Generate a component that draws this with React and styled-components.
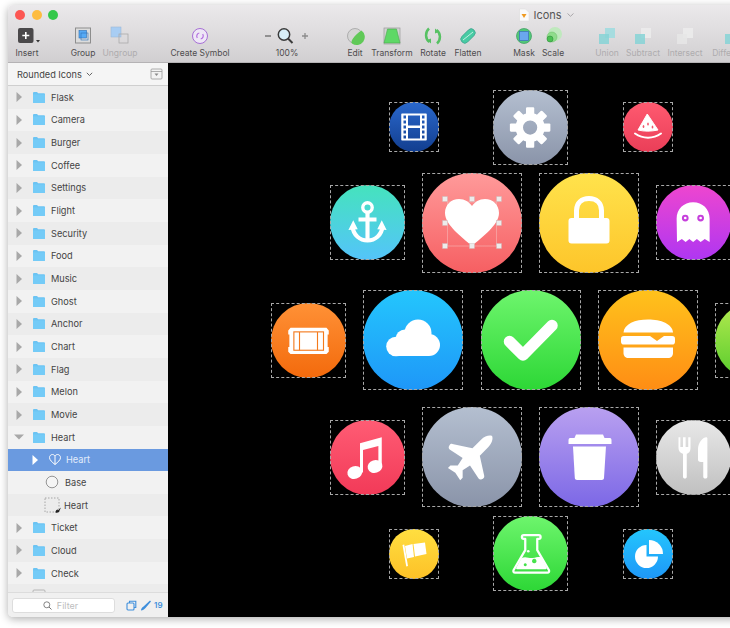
import styled, { createGlobalStyle } from "styled-components";

const GlobalStyle = createGlobalStyle`
  html, body {
    margin: 0;
    padding: 0;
    background: #fff;
    font-family: "Inter", "Liberation Sans", sans-serif;
  }
`;

const Page = styled.div`
  width: 730px;
  height: 628px;
  padding: 5px 0 0 8px;
  box-sizing: border-box;
  overflow: hidden;
`;

const Ventana = styled.div`
  width: 760px;
  height: 612px;
  display: flex;
  flex-direction: column;
  border-radius: 5px;
  overflow: hidden;
  box-shadow: 0 2px 9px rgba(0, 0, 0, 0.32);
`;

const Barra = styled.header`
  height: 58px;
  flex: none;
  display: flex;
  flex-direction: column;
  background: linear-gradient(#ebe9eb, #d1cfd1);
  border-bottom: 1px solid #b5b3b5;
  box-sizing: border-box;
`;

const FilaTitulo = styled.div`
  height: 19px;
  flex: none;
  display: flex;
  align-items: center;
  padding-left: 7px;
`;

const Luz = styled.span`
  width: 10px;
  height: 10px;
  border-radius: 50%;
  margin-right: 6.5px;
  background: ${(props) => props.$color};
`;

const Titulo = styled.div`
  display: flex;
  align-items: center;
  margin-left: 453px;
  font-size: 11px;
  color: #555;
  gap: 4px;
  svg {
    display: block;
  }
`;

const Herramientas = styled.div`
  display: flex;
  align-items: flex-start;
`;

const Tool = styled.div`
  width: ${(props) => props.$w}px;
  margin-left: ${(props) => props.$gap || 0}px;
  flex: none;
  display: flex;
  flex-direction: column;
  align-items: center;
  font-size: 8.5px;
  white-space: nowrap;
  color: ${(props) => (props.$off ? "#aeacae" : "#4e4c4e")};
  svg {
    display: block;
    height: 22px;
    margin-top: 1px;
    margin-bottom: 1px;
  }
`;

const Cuerpo = styled.div`
  flex: 1;
  display: flex;
  min-height: 0;
`;

const Lateral = styled.aside`
  width: 160px;
  flex: none;
  display: flex;
  flex-direction: column;
  background: #efefef;
`;

const CabeceraLateral = styled.div`
  height: 23px;
  flex: none;
  display: flex;
  align-items: center;
  justify-content: space-between;
  padding: 0 5px 0 9px;
  background: #f5f5f5;
  border-bottom: 1px solid #cfcfcf;
  box-sizing: border-box;
  font-size: 9.2px;
  color: #444;
  svg {
    display: block;
  }
`;

const Pagina = styled.span`
  display: flex;
  align-items: center;
  gap: 4px;
`;

const Lista = styled.div`
  flex: 1;
  overflow: hidden;
  min-height: 0;
`;

const Fila = styled.div`
  height: 22.67px;
  display: flex;
  align-items: center;
  font-size: 9.2px;
  box-sizing: border-box;
  padding-left: ${(props) => props.$indent}px;
  color: ${(props) => (props.$selected ? "#e4edfb" : "#444")};
  background: ${(props) =>
    props.$selected ? "#6a9ae0" : props.$alt ? "#f2f2f2" : "#ececec"};
  svg {
    display: block;
    flex: none;
  }
`;

const Hueco = styled.span`
  width: 8px;
  flex: none;
`;

const Etiqueta = styled.span`
  margin-left: ${(props) => props.$gap}px;
`;

const PieLateral = styled.div`
  height: 25px;
  flex: none;
  display: flex;
  align-items: center;
  padding-left: 4px;
  background: #f0f0f0;
  border-top: 1px solid #dcdcdc;
  box-sizing: border-box;
  color: #3f8fdc;
  font-size: 8px;
  font-weight: 600;
  svg {
    display: block;
  }
`;

const Filtro = styled.div`
  width: 103px;
  height: 15px;
  display: flex;
  align-items: center;
  justify-content: center;
  gap: 5px;
  background: #fff;
  border: 1px solid #ddd;
  border-radius: 3px;
  box-sizing: border-box;
  margin-right: 11px;
  color: #bdbdbd;
  font-size: 9px;
  font-weight: 400;
  padding-right: 6px;
`;

const Pluma = styled.svg`
  margin-left: 3px;
`;

const Contador = styled.span`
  margin-left: 2px;
`;

const Lienzo = styled.main`
  flex: 1;
  position: relative;
  background: #000;
  overflow: hidden;
`;

const Marco = styled.div`
  position: absolute;
  left: ${(props) => props.$x - 168}px;
  top: ${(props) => props.$y - 63}px;
  width: ${(props) => props.$size}px;
  height: ${(props) => props.$size}px;
  box-sizing: border-box;
  outline: 1px dashed #a8a8a8;
  outline-offset: -1px;
`;

const Disco = styled.div`
  width: 100%;
  height: 100%;
  border-radius: 50%;
  background: linear-gradient(${(props) => props.$from}, ${(props) => props.$to});
  svg {
    display: block;
    width: 100%;
    height: 100%;
  }
`;

const W = "#fff";

const FolderIcon = () => (
  <svg width="14" height="13" viewBox="0 0 14 13">
    <path d="M1 2.2C1 1.5 1.5 1 2.2 1H5l1.2 1.3h5.6c.7 0 1.2.5 1.2 1.2V11c0 .6-.5 1-1.2 1H2.2C1.5 12 1 11.6 1 11z" fill="#6cc4f3" />
    <path d="M1 3.6h12V11c0 .6-.5 1-1.2 1H2.2C1.5 12 1 11.6 1 11z" fill="#74cbf7" />
  </svg>
);

const Flecha = ({ down, color = "#a8a8a8" }) => (
  <svg width="10" height="10" viewBox="0 0 10 10">
    {down ? (
      <path d="M0 2.5h10L5 7.5z" fill={color} />
    ) : (
      <path d="M2.5 0v10L8 5z" fill={color} />
    )}
  </svg>
);

const capas = [
  "Flask", "Camera", "Burger", "Coffee", "Settings", "Flight", "Security", "Food",
  "Music", "Ghost", "Anchor", "Chart", "Flag", "Melon", "Movie",
];

const capasFin = ["Ticket", "Cloud", "Check"];

const CarpetaFila = ({ nombre, alt, open }) => (
  <Fila $indent={6} $alt={alt}>
    <Flecha down={open} />
    <Hueco />
    <FolderIcon />
    <Etiqueta $gap={5}>{nombre}</Etiqueta>
  </Fila>
);

const Gear = () => (
  <g fill={W}>
    <circle cx="49.5" cy="50" r="14.5" fill="none" stroke={W} strokeWidth="10" />
    {[0, 45, 90, 135, 180, 225, 270, 315].map((a) => (
      <rect key={a} x="44" y="23" width="11" height="12" rx="1.5" transform={`rotate(${a} 49.5 50)`} />
    ))}
  </g>
);

const glyphs = {
  movie: (
    <path
      fillRule="evenodd"
      fill={W}
      d="M26 23h48a1.5 1.5 0 0 1 1.5 1.5v51a1.5 1.5 0 0 1-1.500 1.500H26a1.500 1.500 0 0 1-1.500-1.500v-51A1.500 1.500 0 0 1 26 23z
      M29 27v6h5v-6z M29 37v6h5v-6z M29 47v6h5v-6z M29 57v6h5v-6z M29 67v6h5v-6z
      M66 27v6h5v-6z M66 37v6h5v-6z M66 47v6h5v-6z M66 57v6h5v-6z M66 67v6h5v-6z
      M38 27v20h24v-20z M38 52v21h24v-21z"
    />
  ),
  melon: (
    <g fill={W}>
      <path d="M48.500 24L30 56c12 3 26 3 40 0z" stroke={W} strokeWidth="2" strokeLinejoin="round" />
      <path d="M24 63c16 11 36 11 52 0" fill="none" stroke={W} strokeWidth="4" strokeLinecap="round" />
      <ellipse cx="41" cy="49" rx="1.700" ry="3" fill="#f2546a" />
      <ellipse cx="50" cy="44" rx="1.700" ry="3" fill="#f2546a" />
      <ellipse cx="59" cy="50" rx="1.700" ry="3" fill="#f2546a" />
    </g>
  ),
  anchor: (
    <g stroke={W} fill="none">
      <circle cx="50" cy="30" r="6.300" strokeWidth="4.500" />
      <path d="M50 36v37" strokeWidth="5.500" />
      <path d="M38 46h24" strokeWidth="5.500" />
      <path d="M30 55c1 12 10 19 20 19s19-7 20-19" strokeWidth="5.500" />
      <path d="M24.500 60L31 47l6 12z M75.500 60L69 47l-6 12z" fill={W} stroke="none" />
    </g>
  ),
  heart: (
    <g>
      <path d="M25.500 29h49v44h-49z" fill="none" stroke="#f7b5b5" strokeWidth="0.600" />
      <path fill={W} d="M50 73C40 64 23 52 23 40c0-8 6-14 14-14 6 0 10 3 13 7 3-4 7-7 13-7 8 0 14 6 14 14 0 12-17 24-27 33z" />
      {[[23, 26], [50, 26], [77, 26], [23, 50], [77, 50], [23, 73], [50, 73], [77, 73]].map(([x, y]) => (
        <rect key={`${x}-${y}`} x={x - 2.500} y={y - 2.500} width="5" height="5" fill="#ececec" stroke="#c8b4b4" strokeWidth="0.400" />
      ))}
    </g>
  ),
  lock: (
    <g>
      <path d="M37.500 47V37.500C37.500 29.500 43 25.500 50 25.500S62.500 29.500 62.500 37.500V47" fill="none" stroke={W} strokeWidth="5" />
      <rect x="29.500" y="45" width="41" height="25.500" rx="3" fill={W} />
    </g>
  ),
  ghost: (
    <g>
      <path fill={W} d="M27.500 45C27.500 32 37 23 49.500 23S71.500 32 71.500 45V76L65 72l-5.500 4-5-4-5 4-5-4-5 4-5-4-6.500 4z" />
      <circle cx="39" cy="44" r="4.500" fill="#c63fdc" />
      <circle cx="59.500" cy="44" r="4.500" fill="#c63fdc" />
      <circle cx="39" cy="44" r="1.800" fill={W} />
      <circle cx="59.500" cy="44" r="1.800" fill={W} />
    </g>
  ),
  ticket: (
    <g>
      <path fill={W} d="M26 33h48l3 3.500v5.500h-1.500v16.500H77V65l-3 3H26l-3-3v-6.500h1.500V42H23v-5.500z" />
      <rect x="30.500" y="38.500" width="39.500" height="24.500" fill="none" stroke="#f47a1d" strokeWidth="1.500" />
      <path d="M38 38.500v24.500M62 38.500v24.500" stroke="#f47a1d" strokeWidth="1.500" />
    </g>
  ),
  cloud: (
    <g fill={W}>
      <circle cx="33" cy="56.500" r="9.800" />
      <circle cx="42" cy="49" r="9.500" />
      <circle cx="55" cy="43" r="13.500" />
      <circle cx="66" cy="55" r="11" />
      <rect x="33" y="50" width="33" height="16" />
    </g>
  ),
  check: (
    <path d="M28.500 51.500L42 65L71 35.500" fill="none" stroke={W} strokeWidth="11.500" strokeLinecap="round" strokeLinejoin="round" />
  ),
  burger: (
    <g fill={W}>
      <path d="M25.500 42.500C26 34 37 29.500 50 29.500S74.500 34 75 42.500z" />
      <rect x="23" y="46" width="54" height="8.500" rx="2.800" />
      <path d="M52 46h14l-7 5z" fill="#ffa81c" />
      <path d="M25.500 57.500h49.500V63c0 3-2 5-5 5H30.500c-3 0-5-2-5-5z" />
    </g>
  ),
  music: (
    <g fill={W}>
      <path d="M40 31L69 23v39h-4.500V34.500L44 40v30h-4z" />
      <ellipse cx="33" cy="70" rx="10" ry="8.500" transform="rotate(-18 33 70)" />
      <ellipse cx="60" cy="62" rx="10" ry="8.500" transform="rotate(-18 60 62)" />
    </g>
  ),
  plane: (
    <path
      fill={W}
      transform="translate(18.600 21.700) scale(2.450)"
      d="M17.800 19.200 16 11l3.500-3.500C21 6 21.500 4 21 3c-1-.5-3 0-4.500 1.500L13 8 4.800 6.200c-.5-.1-.9.1-1.100.5l-.3.5c-.2.5-.1 1 .3 1.300L9 12l-2 3H4l-1 1 3 2 2 3 1-1v-3l3-2 3.500 5.300c.3.4.8.5 1.300.3l.5-.2c.4-.3.6-.7.5-1.200z"
    />
  ),
  cup: (
    <g fill={W}>
      <path d="M37 27.500h27l1.500 3.500H71c1 0 1.500 1 1.500 2.500V37h-43v-3.500c0-1.500.5-2.500 1.500-2.500h4.500z" />
      <path d="M34 39.500h33L65 71c-.1 1.300-1 2-2.200 2H38c-1.200 0-2.100-.7-2.200-2z" />
    </g>
  ),
  fork: (
    <g fill={W}>
      <path d="M30 23h2.500v13h3.500V23h3.500v13H43V23h3v14c0 5-2 7-5 8v31c0 1.200-1 2-2.500 2S36 77.200 36 76V45c-3-1-6-3-6-8z" />
      <path d="M67 23c1 0 1.500.7 1.500 2v51c0 1.200-1 2-2.800 2-1.600 0-2.700-.8-2.700-2V56h-3c-2 0-4-1-4-3V39c0-8 6-16 11-16z" />
    </g>
  ),
  flag: (
    <g fill={W}>
      <path d="M27 32l3.500-1 7.500 43-3.500 1z" />
      <path d="M32 34l15-4 3 26-14 3z" />
      <path d="M49 30l23-3 3 23-23 5z" />
    </g>
  ),
  flask: (
    <g>
      <path d="M41 25.500h20a2 2 0 0 1 0 5h-2v15l15.500 26.500c1 2 0 3.500-2 3.500H29.500c-2 0-3-1.500-2-3.500L43 45.500v-15h-2a2 2 0 0 1 0-5z" fill="none" stroke={W} strokeWidth="3" strokeLinejoin="round" />
      <path fill={W} fillRule="evenodd" d="M38 56c6-3 10 1 15 0s9-2 11-1l7.500 14c.5 1-.2 2-1.200 2H32c-1 0-1.500-1-1-2z M55 57a3 3 0 1 0 .01 0z M43 63a2 2 0 1 0 .01 0z" />
      <circle cx="47" cy="47" r="1.800" fill={W} />
    </g>
  ),
  pie: (
    <g fill={W}>
      <path d="M47 55V32A23 23 0 1 0 70 55z" />
      <path d="M52 50V22A28 28 0 0 1 80 50z" />
    </g>
  ),
};

const iconos = [
  { id: "movie", x: 389, y: 102, size: 50, from: "#2a68cc", to: "#123e8f" },
  { id: "gear", x: 493, y: 90, size: 75, from: "#b4bfd0", to: "#8a94a9" },
  { id: "melon", x: 623, y: 102, size: 50, from: "#ff5a70", to: "#ea3e58" },
  { id: "anchor", x: 330, y: 185, size: 75, from: "#45e3bd", to: "#54c4fa" },
  { id: "heart", x: 422, y: 173, size: 100, from: "#ff9a9a", to: "#f65f62" },
  { id: "lock", x: 539, y: 173, size: 100, from: "#ffe34c", to: "#fdc52a" },
  { id: "ghost", x: 656, y: 185, size: 75, from: "#ee46cf", to: "#af36f2" },
  { id: "ticket", x: 271, y: 303, size: 75, from: "#ff9136", to: "#f36a0c" },
  { id: "cloud", x: 363, y: 290, size: 100, from: "#24c6fd", to: "#1e97f8" },
  { id: "check", x: 481, y: 290, size: 100, from: "#6ef56d", to: "#2dd736" },
  { id: "burger", x: 598, y: 290, size: 100, from: "#ffc21c", to: "#ff8d14" },
  { id: "lime", x: 715, y: 303, size: 75, from: "#b4ea50", to: "#58cc2c" },
  { id: "music", x: 330, y: 420, size: 75, from: "#ff5c74", to: "#f23a58" },
  { id: "plane", x: 422, y: 407, size: 100, from: "#b4bfd0", to: "#8a94a9" },
  { id: "cup", x: 539, y: 407, size: 100, from: "#b9a0f0", to: "#7c68e6" },
  { id: "fork", x: 656, y: 420, size: 75, from: "#e8e8e8", to: "#c0c0c0" },
  { id: "flag", x: 389, y: 529, size: 50, from: "#ffdf40", to: "#fdc127" },
  { id: "flask", x: 493, y: 516, size: 75, from: "#6ef56d", to: "#2dd736" },
  { id: "pie", x: 623, y: 529, size: 50, from: "#24c6fd", to: "#1e97f8" },
];

const Ic = ({ children, w = 22 }) => (
  <svg width={w} height="22" viewBox={`0 0 ${w} 22`}>
    {children}
  </svg>
);

const Teal = ({ d1, d2 }) => (
  <Ic>
    <rect x="9" y="3" width="10" height="10" fill={d1} opacity="0.85" />
    <rect x="3" y="9" width="10" height="10" fill={d2} opacity="0.85" />
  </Ic>
);

const App = () => (
  <>
    <GlobalStyle />
    <Page>
      <Ventana>
        <Barra>
          <FilaTitulo>
            <Luz $color="#fc5753" />
            <Luz $color="#fdbc40" />
            <Luz $color="#34c84a" />
            <Titulo>
              <svg width="12" height="14" viewBox="0 0 12 14">
                <path d="M1.500 1h6L11 4.500V13H1.500z" fill="#fafafa" stroke="#d8d8d8" strokeWidth="0.500" />
                <path d="M3.500 6h5L6 10z" fill="#ef9a20" />
              </svg>
              <span>Icons</span>
              <svg width="9" height="6" viewBox="0 0 9 6">
                <path d="M1.500 1.500L4.500 4.300 7.500 1.500" fill="none" stroke="#a9a7a9" strokeWidth="1" />
              </svg>
            </Titulo>
          </FilaTitulo>
          <Herramientas>
            <Tool $w={38}>
              <Ic w={26}>
                <rect x="4" y="3" width="15.500" height="15" rx="2" fill="#4a484a" />
                <path d="M11.800 7v7M8.300 10.500h7" stroke="#fff" strokeWidth="1.600" />
                <path d="M22 15h4l-2 2.500z" fill="#333" />
              </Ic>
              Insert
            </Tool>
            <Tool $w={34} $gap={20}>
              <Ic>
                <rect x="3.500" y="3" width="15" height="15" fill="#dcdcdc" stroke="#8d8d8d" strokeWidth="1" />
                <rect x="7" y="5.500" width="7.500" height="7.500" fill="#56aaf5" stroke="#2c6fb5" strokeWidth="0.600" />
                <rect x="9" y="8" width="7" height="7" fill="none" stroke="#2c6fb5" strokeWidth="0.600" />
              </Ic>
              Group
            </Tool>
            <Tool $w={40} $off>
              <Ic>
                <rect x="2" y="2" width="10" height="10" fill="#a8cdf3" stroke="#9db9d6" strokeWidth="0.600" />
                <rect x="10" y="9" width="9" height="9" fill="none" stroke="#ababab" strokeWidth="0.800" />
              </Ic>
              Ungroup
            </Tool>
            <Tool $w={70} $gap={25}>
              <Ic>
                <circle cx="11" cy="11" r="7.500" fill="#eee7f6" stroke="#a76fd6" strokeWidth="1" />
                <path d="M8.300 13c-1.200-2 -.4-4.500 2-5M13.700 9c1.200 2 .4 4.500-2 5" fill="none" stroke="#b46fe0" strokeWidth="1.200" />
              </Ic>
              Create Symbol
            </Tool>
            <Tool $w={64} $gap={20}>
              <Ic w={50}>
                <path d="M3 11h6" stroke="#777" strokeWidth="1.300" />
                <circle cx="22" cy="9.500" r="5.700" fill="#d7eef7" stroke="#3b3b3b" strokeWidth="1.500" />
                <path d="M26 13.500L30.500 18" stroke="#3b3b3b" strokeWidth="2" />
                <path d="M40 11h6M43 8v6" stroke="#8c8c8c" strokeWidth="1.300" />
              </Ic>
              100%
            </Tool>
            <Tool $w={30} $gap={21}>
              <Ic>
                <circle cx="11" cy="11" r="7.500" fill="#d5d5d5" stroke="#9a9a9a" strokeWidth="0.700" />
                <path d="M17.500 5.500A8 8 0 0 1 8 18.500c-1-1-.5-3 1-5 2-3 5-6 8.500-8z" fill="#60c958" />
              </Ic>
              Edit
            </Tool>
            <Tool $w={44}>
              <Ic>
                <rect x="3" y="3" width="16" height="16" fill="#d2d2d2" stroke="#9a9a9a" strokeWidth="0.700" />
                <path d="M6.500 4L15.500 4 19 18H3z" fill="#5ed866" stroke="#4aa94f" strokeWidth="0.600" />
              </Ic>
              Transform
            </Tool>
            <Tool $w={38}>
              <Ic>
                <path d="M7 3.500C3 7 3 14 7.500 17" fill="none" stroke="#57c163" strokeWidth="2.500" />
                <path d="M5 15l4 3.500v-5z" fill="#57c163" />
                <path d="M15 18.500C19 15 19 8 14.500 5" fill="none" stroke="#57c163" strokeWidth="2.500" />
                <path d="M17 7l-4-3.500v5z" fill="#57c163" />
              </Ic>
              Rotate
            </Tool>
            <Tool $w={32}>
              <Ic>
                <rect x="2.500" y="7" width="17" height="8" rx="4" transform="rotate(-45 11 11)" fill="#48cba3" stroke="#3f9e8d" strokeWidth="0.700" />
                <path d="M6 15L16 7" stroke="#c6efe3" strokeWidth="1" />
              </Ic>
              Flatten
            </Tool>
            <Tool $w={32} $gap={24}>
              <Ic>
                <circle cx="11" cy="11" r="7.500" fill="#52c87a" stroke="#3b9b5c" strokeWidth="0.700" />
                <rect x="6.500" y="6.500" width="9" height="9" fill="#6aa7ee" stroke="#3b6eb5" strokeWidth="0.700" />
              </Ic>
              Mask
            </Tool>
            <Tool $w={26}>
              <Ic>
                <circle cx="13" cy="9" r="7" fill="#bfe9bd" />
                <circle cx="10" cy="12" r="5" fill="#8fdc8b" stroke="#6cbf6a" strokeWidth="0.500" />
                <circle cx="8" cy="14" r="3" fill="#4bc153" stroke="#2f8f3b" strokeWidth="0.600" />
              </Ic>
              Scale
            </Tool>
            <Tool $w={34} $gap={24} $off>
              <Teal d1="#9cdcdf" d2="#86d4d6" />
              Union
            </Tool>
            <Tool $w={38} $off>
              <Teal d1="#ececec" d2="#86d4d6" />
              Subtract
            </Tool>
            <Tool $w={46} $off>
              <Teal d1="#ececec" d2="#e6e6e6" />
              Intersect
            </Tool>
            <Tool $w={50} $off>
              <Teal d1="#9cdcdf" d2="#86d4d6" />
              Difference
            </Tool>
          </Herramientas>
        </Barra>
        <Cuerpo>
          <Lateral>
            <CabeceraLateral>
              <Pagina>
                Rounded Icons
                <svg width="7" height="5" viewBox="0 0 7 5">
                  <path d="M.8.800L3.500 3.500 6.200.800" fill="none" stroke="#666" strokeWidth="1" />
                </svg>
              </Pagina>
              <svg width="13" height="12" viewBox="0 0 13 12">
                <rect x="1" y="1" width="11" height="10" rx="1" fill="#f3f3f3" stroke="#9b9b9b" strokeWidth="0.800" />
                <path d="M1 3.500h11" stroke="#9b9b9b" strokeWidth="0.800" />
                <path d="M4.500 5.500h4L6.500 8z" fill="#8a8a8a" />
              </svg>
            </CabeceraLateral>
            <Lista>
              {capas.map((nombre, i) => (
                <CarpetaFila key={nombre} nombre={nombre} alt={i % 2 === 1} />
              ))}
              <CarpetaFila nombre="Heart" alt={true} open />
              <Fila $indent={22} $selected>
                <Flecha color="#fff" />
                <Hueco />
                <svg width="14" height="13" viewBox="0 0 14 13">
                  <path d="M7 11.500C4 9 1.500 7 1.500 4.500 1.500 3 2.800 1.500 4.400 1.500 5.500 1.500 6.400 2.200 7 3c.6-.8 1.500-1.500 2.600-1.500 1.600 0 2.900 1.500 2.900 3C12.500 7 10 9 7 11.500z M7 3v8.500" fill="none" stroke="#fff" strokeWidth="1" />
                </svg>
                <Etiqueta $gap={4}>Heart</Etiqueta>
              </Fila>
              <Fila $indent={37} $alt>
                <svg width="14" height="14" viewBox="0 0 14 14">
                  <circle cx="7" cy="7" r="5.800" fill="#f5f5f5" stroke="#8a8a8a" strokeWidth="0.900" />
                </svg>
                <Etiqueta $gap={6}>Base</Etiqueta>
              </Fila>
              <Fila $indent={36}>
                <svg width="18" height="17" viewBox="0 0 18 17">
                  <rect x="1" y="1" width="14" height="14" fill="none" stroke="#8a8a8a" strokeWidth="0.700" strokeDasharray="1.500 1.500" />
                  <path d="M11.500 15.500c0-2 1-3 2.500-3l-.2 1 3.200-3-1.800 3.800c-.5 1.500-2 1.700-3.700 1.200z" fill="#222" />
                </svg>
                <Etiqueta $gap={2}>Heart</Etiqueta>
              </Fila>
              {capasFin.map((nombre, i) => (
                <CarpetaFila key={nombre} nombre={nombre} alt={i % 2 === 0} />
              ))}
              <Fila $indent={24}>
                <svg width="14" height="14" viewBox="0 0 14 14">
                  <rect x="1" y="1" width="12" height="12" rx="1" fill="none" stroke="#a8a8a8" strokeWidth="0.800" />
                </svg>
              </Fila>
            </Lista>
            <PieLateral>
              <Filtro>
                <svg width="9" height="9" viewBox="0 0 9 9">
                  <circle cx="3.800" cy="3.800" r="3" fill="none" stroke="#777" strokeWidth="0.900" />
                  <path d="M6 6L8.500 8.500" stroke="#777" strokeWidth="1" />
                </svg>
                Filter
              </Filtro>
              <svg width="11" height="11" viewBox="0 0 11 11">
                <rect x="1" y="3" width="7" height="7" rx="1" fill="none" stroke="#3f8fdc" strokeWidth="1.100" />
                <path d="M3.500 3V1.200h6.300v6.300H8" fill="none" stroke="#3f8fdc" strokeWidth="1.100" />
              </svg>
              <Pluma width="12" height="11" viewBox="0 0 12 11">
                <path d="M1 10.500c0-2 1-3 2.500-4L10 .5l1 1-5.500 6.500C4 9.500 3 10.500 1 10.500z" fill="#3f8fdc" />
              </Pluma>
              <Contador>19</Contador>
            </PieLateral>
          </Lateral>
          <Lienzo>
            {iconos.map((ic) => (
              <Marco key={ic.id} $x={ic.x} $y={ic.y} $size={ic.size}>
                <Disco $from={ic.from} $to={ic.to}>
                  <svg viewBox="0 0 100 100">
                    {ic.id === "gear" ? <Gear /> : glyphs[ic.id]}
                  </svg>
                </Disco>
              </Marco>
            ))}
          </Lienzo>
        </Cuerpo>
      </Ventana>
    </Page>
  </>
);

export default App;
